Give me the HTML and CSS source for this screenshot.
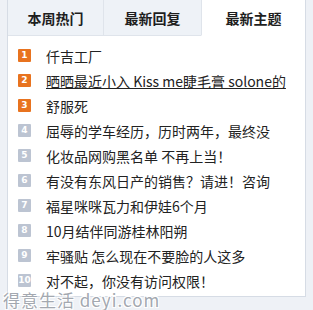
FILE: index.html
```html
<!DOCTYPE html>
<html lang="zh">
<head>
<meta charset="utf-8">
<link rel="stylesheet" href="styles.css">
</head>
<body>
<div class="panel">
  <div class="tabs">
    <div class="tab t1">本周热门</div>
    <div class="tab t2">最新回复</div>
    <div class="tab t3 active">最新主题</div>
  </div>
  <ul class="list">
    <li><span class="num hot">1</span><span class="txt">仟吉工厂</span></li>
    <li><span class="num hot">2</span><span class="txt u">晒晒最近小入 Kiss me睫毛膏 solone的</span></li>
    <li><span class="num hot">3</span><span class="txt">舒服死</span></li>
    <li><span class="num">4</span><span class="txt">屈辱的学车经历，历时两年，最终没</span></li>
    <li><span class="num">5</span><span class="txt">化妆品网购黑名单 不再上当！</span></li>
    <li><span class="num">6</span><span class="txt">有没有东风日产的销售？请进！咨询</span></li>
    <li><span class="num">7</span><span class="txt">福星咪咪瓦力和伊娃6个月</span></li>
    <li><span class="num">8</span><span class="txt">10月结伴同游桂林阳朔</span></li>
    <li><span class="num">9</span><span class="txt">牢骚贴 怎么现在不要脸的人这多</span></li>
    <li><span class="num">10</span><span class="txt">对不起，你没有访问权限！</span></li>
  </ul>
</div>
<div class="mark">得意生活 deyi.com</div>
</body>
</html>
```
FILE: styles.css
```css
html, body {
  margin: 0;
  padding: 0;
}
body {
  width: 313px;
  height: 310px;
  background: #eef1f6;
  font-family: "Noto Sans CJK SC", "Noto Sans", sans-serif;
  position: relative;
  overflow: hidden;
}
.panel {
  margin-left: 7px;
  width: 297px;
  height: 296px;
  background: #fff;
  border: 1px solid #d6dce5;
  border-top: none;
}
.tabs {
  display: flex;
  height: 36px;
}
.tab {
  display: flex;
  align-items: center;
  justify-content: center;
  font-size: 14px;
  font-weight: bold;
  color: #1e1e1e;
  background: #eef2f7;
  border-bottom: 1px solid #dfe4eb;
  box-sizing: border-box;
}
.t1 { width: 96px; border-right: 1px solid #dfe4eb; }
.t2 { width: 97px; }
.t3 { flex: 1; }
.tab.active {
  background: #fff;
  border-bottom-color: #fff;
  border-left: 1px solid #dfe4eb;
}
.list {
  list-style: none;
  margin: 0;
  padding: 7px 0 0 10px;
}
.list li {
  height: 25px;
  display: flex;
  align-items: center;
}
.num {
  width: 13px;
  height: 13px;
  flex: none;
  background: #bcc4d2;
  color: #fff;
  font-family: "DejaVu Sans", sans-serif;
  font-size: 9px;
  font-weight: bold;
  line-height: 13px;
  text-align: center;
  border-radius: 1px;
}
.num.hot { background: #e8731f; }
.txt {
  margin-left: 15px;
  font-size: 14px;
  color: #222;
  white-space: nowrap;
  overflow: hidden;
  max-width: 248px;
  line-height: 18px;
}
.txt.u { text-decoration: underline; }
.mark {
  position: absolute;
  left: 3px;
  bottom: 0;
  font-size: 17px;
  line-height: 20px;
  letter-spacing: 1px;
  color: #a3a8b0;
  text-shadow: 1px 1px 0 #fff, -1px -1px 0 #fff, 1px -1px 0 #fff, -1px 1px 0 #fff;
}
```
